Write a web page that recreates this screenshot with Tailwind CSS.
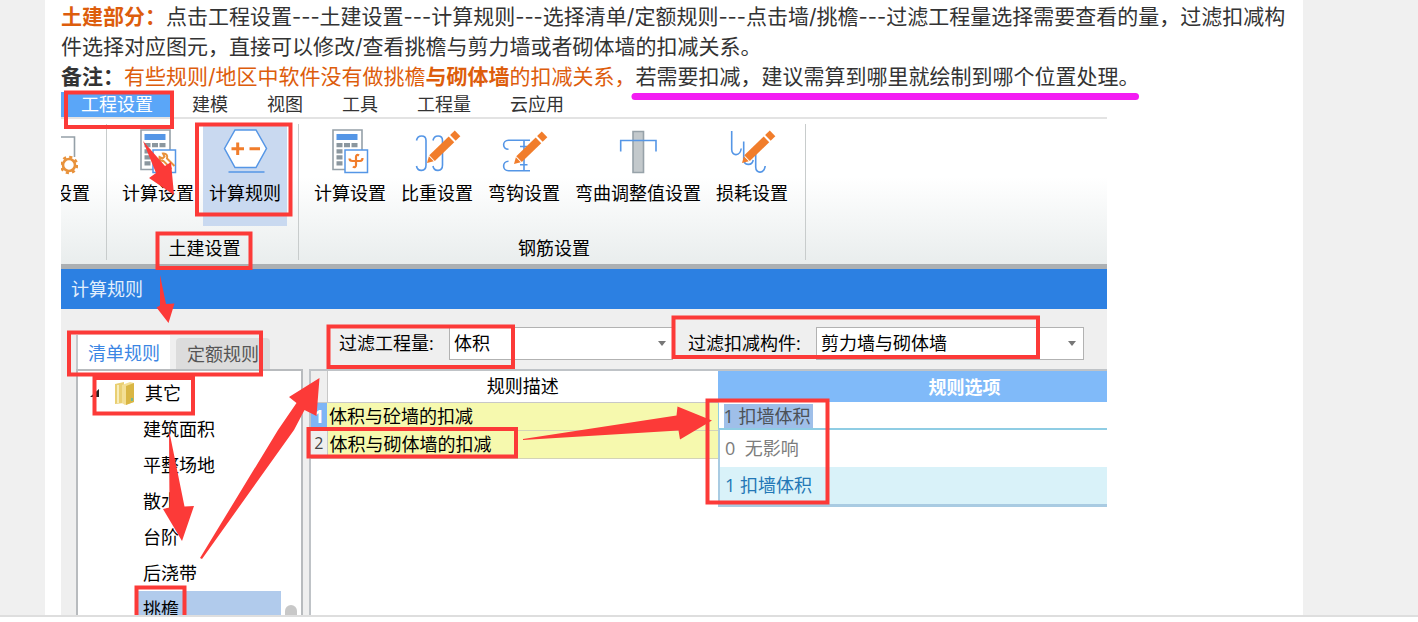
<!DOCTYPE html>
<html lang="zh-CN">
<head>
<meta charset="utf-8">
<title>计算规则</title>
<script src="https://cdn.jsdelivr.net/npm/@tailwindcss/browser@4"></script>
</head>
<body class="flex h-screen flex-col overflow-hidden bg-white font-['Open_Sans','Noto_Sans_CJK_SC',sans-serif] text-[18px] text-black">

<svg class="hidden" aria-hidden="true">
  <symbol id="pencil" viewBox="0 0 48 48">
    <g transform="translate(14 36) rotate(-44)" fill="#f17d2b">
      <path d="M0 0 6-3.500V3.500z"/><path d="M7-4H34v8H7z"/><path d="M36-4h6.500v8H36z"/>
    </g>
  </symbol>
  <symbol id="calculator" viewBox="0 0 48 48">
    <path d="M7 3h29v39.500H7z" fill="#fff" stroke="#95a0a8" stroke-width="1.600"/>
    <path d="M10.500 7h21v6h-21z" fill="#5596e6"/>
    <path d="M10.500 16h6v4.300h-6zM18 16h6v4.300h-6zM25.500 16h6v4.300h-6zM10.500 22.300h6v4.300h-6zM10.500 28.300h6v4.300h-6zM10.500 34.200h6v4.300h-6z" fill="#8b979f"/>
    <path d="M19 23h22.500v22.500H19z" fill="#fff" stroke="#5596e6" stroke-width="1.500"/>
  </symbol>
</svg>

<main class="flex min-h-0 flex-1 overflow-hidden bg-[#f0f0f0] pr-[115px] pl-[45px]">
  <article class="min-w-0 flex-1 bg-white px-4 pt-0.5">
    <div class="font-[Inter,'Noto_Sans_CJK_SC',sans-serif] text-[21px] leading-[30px] text-[#333]">
      <p class="whitespace-nowrap"><strong class="text-[#dd5d0c]">土建部分：</strong>点击工程设置<span class="text-[20px]">---</span>土建设置<span class="text-[20px]">---</span>计算规则<span class="text-[20px]">---</span>选择清单/定额规则<span class="text-[20px]">---</span>点击墙/挑檐<span class="text-[20px]">---</span>过滤工程量选择需要查看的量，过滤扣减构</p>
      <p class="whitespace-nowrap">件选择对应图元，直接可以修改/查看挑檐与剪力墙或者砌体墙的扣减关系。</p>
      <p class="whitespace-nowrap"><strong>备注：</strong><span class="text-[#dd5d0c]">有些规则/地区中软件没有做挑檐<strong>与砌体墙</strong>的扣减关系，</span>若需要扣减，建议需算到哪里就绘制到哪个位置处理。</p>
    </div>

    <section class="relative w-full max-w-[1046px]">
      <nav class="flex h-[27px] gap-[39px] border-b-2 border-[#e3e3e3] text-[#333]">
        <button class="-mr-[18px] bg-[#5aa6f8] pr-[18px] pl-5 leading-[25px] text-white">工程设置</button>
        <button class="leading-[25px]">建模</button>
        <button class="leading-[25px]">视图</button>
        <button class="leading-[25px]">工具</button>
        <button class="leading-[25px]">工程量</button>
        <button class="leading-[25px]">云应用</button>
      </nav>

      <div class="flex h-[145px] bg-linear-to-b from-white from-40% to-[#e9eded] pt-[5px] pb-1">
        <div class="flex w-[46px] justify-end overflow-hidden border-r border-[#c8cccc] pr-4">
          <button class="flex shrink-0 flex-col items-end pt-[3px]">
            <svg class="mr-3 size-12" viewBox="0 0 48 48" fill="none"><path d="M20 10h24.500v20" stroke="#95a0a8" stroke-width="1.600"/><circle cx="39" cy="38" r="6" stroke="#e8923c" stroke-width="2.600"/><circle cx="39" cy="38" r="8" stroke="#e8923c" stroke-width="2.500" stroke-dasharray="3.140 3.140"/></svg>
            <span class="mt-1.5 leading-6">设置</span>
          </button>
        </div>
        <div class="flex flex-col items-center justify-between border-r border-[#c8cccc] pr-[11px] pl-[9px]">
          <div class="flex gap-[3px]">
            <button class="flex h-[102px] flex-col items-center px-1.5 pt-[3px]">
              <svg class="size-12" viewBox="0 0 48 48" fill="none"><use href="#calculator"/><path d="m37.500 42-8-8c-3 .5-4.500-2-4-4l3 1.500 2-2-1.500-3c3-.5 5 2 4 5l7.500 7.500" stroke="#e8923c" stroke-width="2"/></svg>
              <span class="mt-1.5 leading-6">计算设置</span>
            </button>
            <button class="flex h-[102px] flex-col items-center bg-[#c9d9f0] px-1.5 pt-[3px]">
              <svg class="size-12" viewBox="0 0 48 48" fill="none"><path d="M3.500 21.500 14 3h21l10.500 18.500L35 40.500H14z" fill="#fff" stroke="#5596e6" stroke-width="1.500"/><path d="M7.500 45h36" stroke="#5596e6" stroke-width="1.600"/><path d="M10.500 21.700h12.500M16.700 15.500V28M28.500 21.700H39" stroke="#f17d2b" stroke-width="3"/></svg>
              <span class="mt-1.5 leading-6">计算规则</span>
            </button>
          </div>
          <h2 class="pl-1.5 leading-6">土建设置</h2>
        </div>
        <div class="flex flex-col items-center justify-between border-r border-[#c8cccc] pr-[11px] pl-[9px]">
          <div class="flex gap-[3px]">
            <button class="flex h-[102px] flex-col items-center px-1.5 pt-[3px]">
              <svg class="size-12" viewBox="0 0 48 48" fill="none"><use href="#calculator"/><path d="M33 28.500c-2-1.500-3 0-3 1.500v8c0 2-1.500 3-3 1.500M23.500 31.500c0 2 1 2.500 3 2.500h7.500c2 0 2.500-1 2.500-3" stroke="#f17d2b" stroke-width="2.200"/></svg>
              <span class="mt-1.5 leading-6">计算设置</span>
            </button>
            <button class="flex h-[102px] flex-col items-center px-1.5 pt-[3px]">
              <svg class="size-12" viewBox="0 0 48 48" fill="none"><path d="M3.500 13.500c1-6 9.500-6 9.500 0V38c0 7-8.500 7-9.500 1M20 13.500c1-6 9.500-6 9.500 0V38c0 7-8.500 7-9.500 1" stroke="#5596e6" stroke-width="1.600"/><use href="#pencil"/></svg>
              <span class="mt-1.5 leading-6">比重设置</span>
            </button>
            <button class="flex h-[102px] flex-col items-center px-1.5 pt-[3px]">
              <svg class="size-12" viewBox="0 0 48 48" fill="none"><path d="M30 13.300H8.500c-6.500 0-6.500 9 0 9M30 43.700H8.500c-6.500 0-6.500-9.500 0-9.500M24 13.300v30.400M20 19.500h7.500M20 37.700h7.500" stroke="#5596e6" stroke-width="1.600"/><use href="#pencil" y="1"/></svg>
              <span class="mt-1.5 leading-6">弯钩设置</span>
            </button>
            <button class="flex h-[102px] flex-col items-center px-1.5 pt-[3px]">
              <svg class="size-12" viewBox="0 0 48 48" fill="none"><path d="M19 4.500h10.500v41H19z" fill="#c3c9cc" stroke="#97a2a9" stroke-width="1.600"/><path d="M6.700 24.500V13.500H42v11" stroke="#5596e6" stroke-width="1.600"/></svg>
              <span class="mt-1.5 leading-6">弯曲调整值设置</span>
            </button>
            <button class="flex h-[102px] flex-col items-center px-1.5 pt-[3px]">
              <svg class="size-12" viewBox="0 0 48 48" fill="none"><path d="M3.700 4v18.500c0 7 8.500 7 9.500-1M15.700 14.500V32c0 7 8.500 7 9.500 1M27.700 25.500V40c0 7 8.500 7 9.500-1" stroke="#5596e6" stroke-width="1.600"/><use href="#pencil"/></svg>
              <span class="mt-1.5 leading-6">损耗设置</span>
            </button>
          </div>
          <h2 class="pl-1.5 leading-6">钢筋设置</h2>
        </div>
      </div>

      <h1 class="h-[45px] border-t-[5px] border-[#acb0b3] bg-[#2c80e2] pl-2.5 leading-10 text-[#e2effc]">计算规则</h1>

      <div class="flex h-80 gap-1.5 bg-[#efefef] pl-[15px]">
        <div class="flex w-[227px] flex-col pt-[26px]">
          <div class="flex h-[34px] gap-1.5">
            <button class="border-l-2 border-[#c5c9cd] bg-white px-[10px] leading-9 text-[#3b86e4]">清单规则</button>
            <button class="mt-[3px] rounded-t bg-[#dcdcdc] px-[11px] leading-[30px] text-[#555]">定额规则</button>
          </div>
          <div class="relative flex-1 border-2 border-[#b8bbbe] bg-white pt-1">
            <div class="flex h-9 items-center pl-3">
              <svg class="mr-3.5 size-2.5" viewBox="0 0 10 10"><path d="M9 1v8H0z" fill="#222"/></svg>
              <svg class="mr-2.5 h-[25px] w-[21px]" viewBox="0 0 21 25"><path d="M1 3 10 1v21l-9 1z" fill="#e9cf72"/><path d="m8 4 8-3 4 1v19l-9 3-3-2z" fill="#f3df95"/><path d="m12 5 8-3v19l-8 3z" fill="#d9b644"/><path d="M4 4v18" stroke="#f8edba" stroke-width="2"/><path d="M18 17v3" stroke="#51b8ae" stroke-width="1.500"/></svg>
              <span>其它</span>
            </div>
            <ul class="mr-5 ml-[57px] leading-9">
              <li class="pl-2">建筑面积</li>
              <li class="pl-2">平整场地</li>
              <li class="pl-2">散水</li>
              <li class="pl-2">台阶</li>
              <li class="pl-2">后浇带</li>
              <li class="bg-[#b1cbec] pl-2">挑檐</li>
            </ul>
            <div class="absolute right-1 bottom-0 h-[22px] w-3 rounded-full bg-[#c8c8c8]"></div>
          </div>
        </div>

        <div class="flex min-w-0 flex-1 flex-col pt-[18px]">
          <form class="mb-[9px] flex h-[33px] items-center pl-[30px]">
            <label for="quantity" class="w-[110px]">过滤工程量:</label>
            <div class="relative w-[224px]">
              <select id="quantity" class="h-[33px] w-full appearance-none border border-[#b2b2b2] bg-white pl-1"><option>体积</option></select>
              <svg class="pointer-events-none absolute top-[14px] right-[7px] h-[5px] w-2" viewBox="0 0 8 5"><path d="M0 0h8L4 5z" fill="#777"/></svg>
            </div>
            <label for="component" class="ml-[15px] w-[128px]">过滤扣减构件:</label>
            <div class="relative w-[268px]">
              <select id="component" class="h-[33px] w-full appearance-none border border-[#b2b2b2] bg-white pl-1"><option>剪力墙与砌体墙</option></select>
              <svg class="pointer-events-none absolute top-[14px] right-[8px] h-[5px] w-2" viewBox="0 0 8 5"><path d="M0 0h8L4 5z" fill="#777"/></svg>
            </div>
          </form>
          <div class="relative flex-1 overflow-hidden border-t-2 border-l-2 border-[#bfc3c7] bg-white">
            <table class="w-[900px] table-fixed border-collapse">
              <colgroup><col class="w-4"><col class="w-[391px]"><col class="w-[493px]"></colgroup>
              <thead>
                <tr class="h-[31px]">
                  <th class="border-r border-b border-[#c8c8c8] bg-[#efefef] p-0"></th>
                  <th class="border-b border-[#c8c8c8] p-0 leading-[30px] font-normal">规则描述</th>
                  <th class="bg-[#80baf9] p-0 leading-[30px] font-bold text-white">规则选项</th>
                </tr>
              </thead>
              <tbody>
                <tr class="h-7">
                  <th scope="row" class="bg-[#7fb5f5] p-0 leading-[27px] text-white">1</th>
                  <td class="border-b border-[#d3d3b8] bg-[#f6f9ae] py-0 pr-0 pl-0.5 leading-[27px]">体积与砼墙的扣减</td>
                  <td class="border-l border-[#8fcde4] py-0 pr-0 pl-[5px]"><input aria-label="规则选项" value="1 扣墙体积" class="block h-6 w-[89px] bg-[#9fbfe9] text-[#4c5157]"></td>
                </tr>
                <tr class="h-7">
                  <th scope="row" class="border-r border-b border-[#c8c8c8] bg-[#efefef] p-0 text-base leading-[27px] font-normal text-[#444]">2</th>
                  <td class="border-b border-[#d3d3b8] bg-[#f6f9ae] py-0 pr-0 pl-0.5 leading-[27px]">体积与砌体墙的扣减</td>
                  <td class="p-0"></td>
                </tr>
              </tbody>
            </table>
            <ul class="absolute top-[57px] right-0 left-[407px] border-t-2 border-b-[3px] border-l-2 border-t-[#8fcde4] border-b-[#a9cbe2] border-l-[#a9cbe2] bg-white">
              <li class="pl-[5px] leading-[37px] whitespace-pre text-[#7c7c7c]">0  无影响</li>
              <li class="bg-[#d9f2f9] pl-[5px] leading-[37px] text-[#2378b6]">1 扣墙体积</li>
            </ul>
          </div>
        </div>
      </div>

      <!-- Callout boxes and arrows drawn over the program window -->
      <svg class="pointer-events-none absolute top-0 left-0 h-[524px] w-[1047px] overflow-visible" viewBox="61 92 1047 524" aria-hidden="true">
        <path d="M635 96.500H1135.500" stroke="#f31cf3" stroke-width="7" stroke-linecap="round"/>
        <g fill="none" stroke="#fc3a38" stroke-width="4">
          <path d="M66 92.500h106V127H66z"/>
          <path d="M197 124.500h93.500V214.500H197z"/>
          <path d="M157.500 233.500h93V268h-93z"/>
          <path d="M69 332.500h192V374.500H69z"/>
          <path d="M94.500 378h98.500V413.500H94.500z"/>
          <path d="M136.500 587.500h48V640h-48z"/>
          <path d="M328.500 326.500H513V367H328.500z"/>
          <path d="M673.500 317.500h364.500V357H673.500z"/>
          <path d="M308.500 429H516V456.500H308.500z"/>
          <path d="M707.500 400.500h120V502.500h-120z"/>
        </g>
        <g fill="#fc3a38">
          <path d="M143 141 165 166 171 162 174 195 149 178 156 173z"/>
          <path d="M160 275 166 304 174.500 303.500 168.500 323 156.500 307.500 160 305.500z"/>
          <path d="M169 430 184.500 506.500 194 506 182 541 163 509 169.500 507.500z"/>
          <path d="M200 558 278 430 296.500 403 289 397 319.500 378 316.500 416 304.500 410 294 430 202 559z"/>
          <path d="M523 439 676.500 415.500 677.500 406.500 712 420.500 680 439.500 678.500 430.500 523 440z"/>
        </g>
      </svg>
    </section>
  </article>
</main>
<footer class="h-[7px] shrink-0 border-t-2 border-[#dedede] bg-white"></footer>
</body>
</html>
